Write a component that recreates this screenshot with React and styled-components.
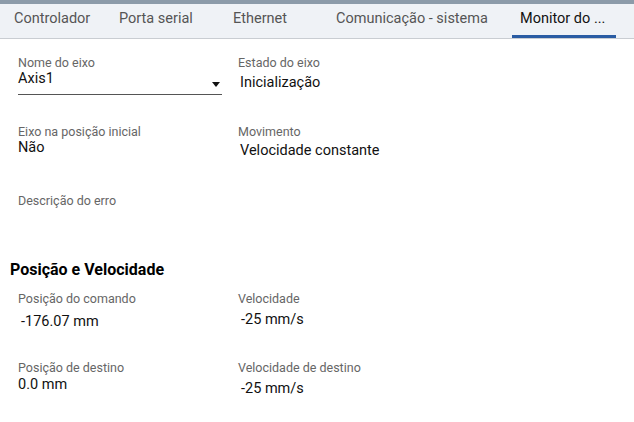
import React from "react";
import styled, { createGlobalStyle } from "styled-components";

const GlobalStyle = createGlobalStyle`
  html, body {
    margin: 0;
    padding: 0;
    background: #ffffff;
    font-family: Roboto, "Liberation Sans", Arial, sans-serif;
  }
`;

const tabs = [
  { label: "Controlador", width: 105 },
  { label: "Porta serial", width: 114 },
  { label: "Ethernet", width: 103 },
  { label: "Comunicação - sistema", width: 184 },
  { label: "Monitor do ...", width: 104, active: true },
];

const Page = styled.div`
  width: 634px;
  height: 422px;
  overflow: hidden;
  background: #fff;
`;

const TopStrip = styled.div`
  height: 4px;
  background: #8c9ba9;
`;

const TabBar = styled.div`
  display: flex;
  height: 34px;
  padding-left: 6px;
  background: #eff2f6;
  border-bottom: 1px solid #c9cdd2;
`;

const Tab = styled.div`
  box-sizing: border-box;
  width: ${(p) => p.$width}px;
  padding: 6px 8px 0;
  font-size: 14.5px;
  line-height: 17px;
  color: ${(p) => (p.$active ? "#111" : "#555")};
  border-bottom: 3px solid ${(p) => (p.$active ? "#2a5ca3" : "transparent")};
  white-space: nowrap;
`;

const Content = styled.div`
  padding: 16px 0 0 18px;
`;

const Grid = styled.div`
  display: grid;
  grid-template-columns: 220px 1fr;
  grid-auto-rows: 69px;
  margin-top: ${(p) => p.$top || 0}px;
`;

const Field = styled.div`
  display: flex;
  flex-direction: column;
`;

const Label = styled.div`
  font-size: 12.5px;
  line-height: 15px;
  color: #666;
`;

const Value = styled.div`
  font-size: 14.5px;
  line-height: 17px;
  color: #111;
  margin-top: ${(p) => p.$top || 0}px;
  padding-left: ${(p) => p.$indent || 0}px;
`;

const Select = styled.div`
  box-sizing: border-box;
  width: 204px;
  height: 25px;
  display: flex;
  justify-content: space-between;
  align-items: flex-start;
  border-bottom: 1px solid #555;
  font-size: 14.5px;
  line-height: 17px;
  color: #111;
`;

const Caret = styled.span`
  width: 0;
  height: 0;
  margin: 12px 2px 0 0;
  border-left: 4px solid transparent;
  border-right: 4px solid transparent;
  border-top: 5px solid #111;
`;

const Heading = styled.h2`
  margin: -2px 0 0 -8px;
  font-size: 16px;
  font-weight: 700;
  color: #000;
  line-height: 20px;
`;

export default function App() {
  return (
    <Page>
      <GlobalStyle />
      <TopStrip />
      <TabBar>
        {tabs.map((t) => (
          <Tab key={t.label} $width={t.width} $active={t.active}>
            {t.label}
          </Tab>
        ))}
      </TabBar>
      <Content>
        <Grid>
          <Field>
            <Label>Nome do eixo</Label>
            <Select>
              <span>Axis1</span>
              <Caret />
            </Select>
          </Field>
          <Field>
            <Label>Estado do eixo</Label>
            <Value $top={4} $indent={2}>Inicialização</Value>
          </Field>
          <Field>
            <Label>Eixo na posição inicial</Label>
            <Value>Não</Value>
          </Field>
          <Field>
            <Label>Movimento</Label>
            <Value $top={3} $indent={2}>Velocidade constante</Value>
          </Field>
          <Field>
            <Label>Descrição do erro</Label>
          </Field>
        </Grid>
        <Heading>Posição e Velocidade</Heading>
        <Grid $top={11}>
          <Field>
            <Label>Posição do comando</Label>
            <Value $top={7} $indent={3}>-176.07 mm</Value>
          </Field>
          <Field>
            <Label>Velocidade</Label>
            <Value $top={5} $indent={3}>-25 mm/s</Value>
          </Field>
          <Field>
            <Label>Posição de destino</Label>
            <Value $top={1}>0.0 mm</Value>
          </Field>
          <Field>
            <Label>Velocidade de destino</Label>
            <Value $top={5} $indent={3}>-25 mm/s</Value>
          </Field>
        </Grid>
      </Content>
    </Page>
  );
}
